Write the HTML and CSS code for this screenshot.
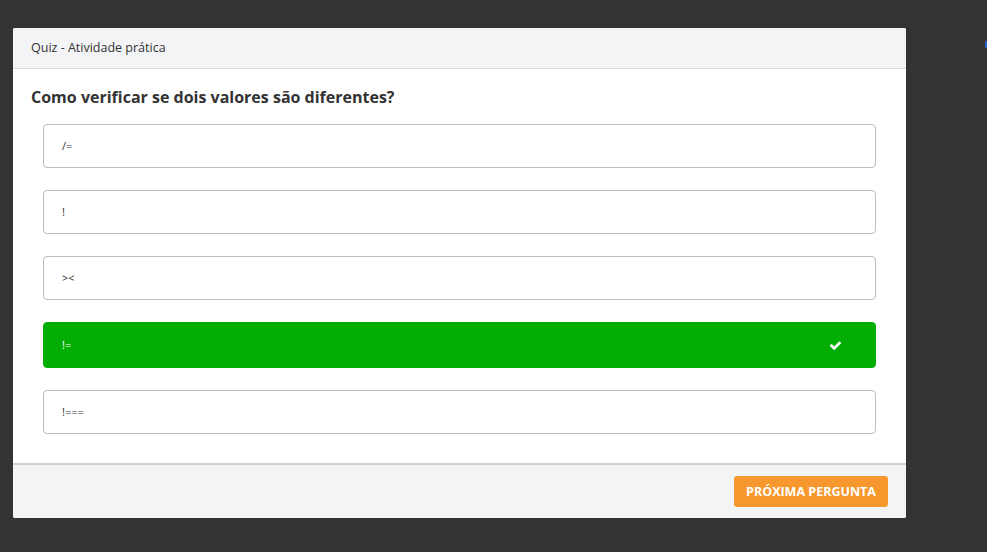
FILE: index.html
```html
<!DOCTYPE html>
<html lang="pt">
<head>
<meta charset="utf-8">
<title>Quiz - Atividade prática</title>
<link rel="stylesheet" href="styles.css">
</head>
<body>
<div class="modal">
  <div class="modal-header">Quiz - Atividade prática</div>
  <div class="modal-body">
    <h2 class="question">Como verificar se dois valores são diferentes?</h2>
    <div class="options">
      <div class="option">/=</div>
      <div class="option">!</div>
      <div class="option">&gt;&lt;</div>
      <div class="option correct">!=
        <svg class="check" viewBox="0 0 1792 1792" width="13" height="13"><path fill="#fff" d="M1671 566q0 40-28 68l-724 724-136 136q-28 28-68 28t-68-28l-136-136-362-362q-28-28-28-68t28-68l136-136q28-28 68-28t68 28l294 295 656-657q28-28 68-28t68 28l136 136q28 28 28 68z"/></svg>
      </div>
      <div class="option">!===</div>
    </div>
  </div>
  <div class="modal-footer">
    <button class="next">PRÓXIMA PERGUNTA</button>
  </div>
</div>
<div class="edge-mark"></div>
</body>
</html>
```
FILE: styles.css
```css
html, body {
  margin: 0;
  padding: 0;
  background: #333333;
  height: 100%;
}
body {
  font-family: "Open Sans", "Noto Sans", sans-serif;
  color: #333;
  padding: 28px 0 0 13px;
  box-sizing: border-box;
}
.modal {
  width: 893px;
  background: #fff;
  border-radius: 2px;
  overflow: hidden;
}
.modal-header {
  height: 41px;
  box-sizing: border-box;
  background: #f3f4f6;
  border-bottom: 1px solid #d9d9d9;
  padding-left: 18px;
  font-size: 12.5px;
  line-height: 39px;
  color: #333;
}
.modal-body {
  padding: 16px 30px 29px 30px;
}
.question {
  margin: 0 0 15px -12px;
  font-size: 16px;
  font-weight: 700;
  line-height: 24px;
  color: #333;
}
.options {
  display: flex;
  flex-direction: column;
  gap: 22px;
}
.option {
  position: relative;
  height: 44px;
  box-sizing: border-box;
  border: 1px solid #bdbdbd;
  border-radius: 4px;
  padding-left: 18px;
  font-size: 11px;
  line-height: 40px;
  color: #333;
  display: flex;
  align-items: center;
  justify-content: space-between;
}
.option.correct {
  height: 46px;
  background: #02ae03;
  border-color: #02ae03;
  color: #fff;
  padding-right: 33px;
}
.check {
  display: block;
}
.modal-footer {
  border-top: 2px solid #cfd0d2;
  background: #f3f4f6;
  height: 55px;
  box-sizing: border-box;
  display: flex;
  justify-content: flex-end;
  align-items: flex-start;
  padding: 11px 18px 0 0;
}
.next {
  width: 154px;
  height: 31px;
  border: none;
  border-radius: 3px;
  background: #f7982e;
  color: #fff;
  font-family: "Open Sans", "Noto Sans", sans-serif;
  font-weight: 700;
  font-size: 12.5px;
  padding: 0;
  cursor: pointer;
}
.edge-mark {
  position: absolute;
  left: 985px;
  top: 41px;
  width: 2px;
  height: 7px;
  background: #2a62c9;
  border-radius: 1px;
}
```
